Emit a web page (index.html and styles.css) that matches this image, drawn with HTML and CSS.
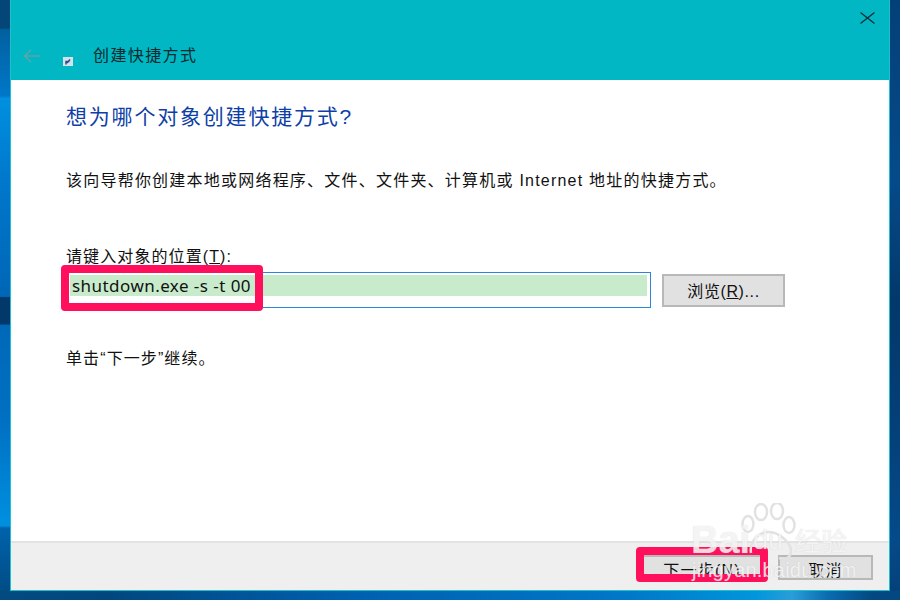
FILE: index.html
```html
<!DOCTYPE html>
<html lang="zh-CN">

<head>
    <meta charset="UTF-8">
    <title>创建快捷方式</title>
    <link rel="stylesheet" href="styles.css">
</head>

<body>
    <div class="ventana">
        <header class="cabecera">
            <svg class="cerrar" width="15" height="12" viewBox="0 0 15 12">
                <path d="M0.5 0.5 L14.5 11.5 M14.5 0.5 L0.5 11.5" stroke="#0b2a30" stroke-width="1.2" fill="none" />
            </svg>
            <div class="titulo-fila">
                <svg class="atras" width="17" height="14" viewBox="0 0 17 14">
                    <path d="M17 7 H1.5 M8 1 L1.5 7 L8 13" stroke="#5fa3ab" stroke-width="1.5" fill="none" />
                </svg>
                <svg class="icono" width="10" height="9" viewBox="0 0 10 9">
                    <rect width="10" height="9" fill="#d5e3e8" />
                    <path d="M3 7.5 V4.5 H6.5 M4 6 L7 2.5" stroke="#2a4f8f" stroke-width="1.5" fill="none" />
                </svg>
                <span class="titulo">创建快捷方式</span>
            </div>
        </header>
        <main class="contenido">
            <h1>想为哪个对象创建快捷方式?</h1>
            <p class="descripcion">该向导帮你创建本地或网络程序、文件、文件夹、计算机或 Internet 地址的快捷方式。</p>
            <label class="etiqueta">请键入对象的位置(<u>T</u>):</label>
            <div class="fila-campo">
                <div class="campo"><span class="seleccion">shutdown.exe -s -t 00</span></div>
                <button class="boton boton-examinar">浏览(<u>R</u>)...</button>
            </div>
            <p class="continuar">单击“下一步”继续。</p>
        </main>
        <footer class="pie">
            <button class="boton boton-siguiente">下一步(<u>N</u>)</button>
            <button class="boton">取消</button>
        </footer>
    </div>

    <!-- marcas rojas encima de la captura -->
    <div class="marca marca-campo"></div>
    <div class="marca marca-siguiente"></div>

    <div class="agua">
        <svg class="pata" width="56" height="60" viewBox="0 0 56 60">
            <g fill="rgba(255,255,255,0.7)" stroke="#e2e2e2" stroke-width="2.5">
                <ellipse cx="7" cy="21" rx="5.5" ry="8" />
                <ellipse cx="20" cy="9" rx="6" ry="8" />
                <ellipse cx="36" cy="8" rx="6" ry="8" />
                <ellipse cx="48" cy="22" rx="5.5" ry="8" />
            </g>
            <path d="M10 50 C8 38 18 29 28 29 C38 29 50 40 50 48 C50 55 44 57 38 55" fill="none" stroke="#e2e2e2" stroke-width="2.5" />
        </svg>
        <span class="agua-logo">Bai</span>
        <span class="agua-du">du</span>
        <span class="agua-jing">经验</span>
        <span class="agua-url">jingyan.baidu.com</span>
    </div>
</body>

</html>
```
FILE: styles.css
```css
body {
    margin: 0;
    height: 600px;
    overflow: hidden;
    position: relative;
    box-sizing: border-box;
    padding: 0 10px 9px;
    display: flex;
    font-family: "Liberation Sans", "Noto Sans CJK SC", sans-serif;
    background-color: #024a86;
    background-repeat: no-repeat;
    background-image:
        linear-gradient(90deg, #024a80 0%, #01477e 12%, #0060b0 40%, #0078c8 70%, #0096dc 84%, #2a9ed8 88%, #0a6cb0 92%, #034880 97%),
        linear-gradient(180deg, #034677 0%, #034677 4.6%, #02609f 5%, #0078c8 16%, #0090e0 16.4%, #0078cc 30%, #0066b6 49.4%, #03386a 49.6%, #03386a 54%, #0068b8 54.2%, #0070c2 70%, #0090e0 87.6%, #0062ac 88%, #004a80 100%),
        linear-gradient(180deg, #044078 0%, #054a8a 30%, #03386a 50%, #043f78 70%, #054a8a 90%, #044078 100%);
    background-size: 900px 9px, 10px 600px, 10px 600px;
    background-position: left bottom, left top, right top;
}

.ventana {
    flex: 1;
    display: flex;
    flex-direction: column;
    border: 1px solid #1fc0cc;
    border-top: none;
    background-color: #fff;
    color: #111;
    letter-spacing: 1.1px;
    font-size: 16px;
}

.cabecera {
    height: 80px;
    box-sizing: border-box;
    background-color: #00b7c3;
    position: relative;
    display: flex;
}

.cerrar {
    position: absolute;
    right: 14px;
    top: 12px;
}

.titulo-fila {
    display: flex;
    align-items: center;
    height: 20px;
    margin-top: 46px;
    padding-left: 12px;
}

.icono {
    margin: 10px 0 0 23px;
}

.titulo {
    margin-left: 20px;
    line-height: 20px;
    letter-spacing: 1.4px;
    color: #0c2a2e;
}

.contenido {
    flex: 1;
    padding: 24px 0 0 55px;
}

h1 {
    margin: 0;
    font-size: 21px;
    font-weight: normal;
    letter-spacing: 1.8px;
    line-height: 26px;
    color: #0f3fa6;
}

.descripcion {
    margin: 41px 0 0;
    line-height: 20px;
    letter-spacing: 1.22px;
}

.etiqueta {
    display: block;
    margin-top: 56px;
    line-height: 20px;
}

.fila-campo {
    display: flex;
    align-items: center;
    margin-top: 5px;
}

.campo {
    width: 585px;
    height: 36px;
    box-sizing: border-box;
    border: 1px solid #2b86d8;
    padding: 2px 3px 0;
    background-color: #fff;
}

.seleccion {
    display: block;
    height: 21px;
    padding-left: 2px;
    background-color: #c8eccb;
    font-family: "Noto Sans", sans-serif;
    font-size: 17px;
    line-height: 21px;
    letter-spacing: 0.45px;
}

.boton {
    width: 123px;
    height: 33px;
    padding: 0;
    border: 2px solid #b8b8b8;
    background-color: #e1e1e1;
    font-family: inherit;
    font-size: 16px;
    letter-spacing: 0.6px;
    color: #111;
}

.boton-examinar {
    margin-left: 11px;
}

.continuar {
    margin: 41px 0 0;
    line-height: 20px;
}

.pie {
    height: 49px;
    box-sizing: border-box;
    border-top: 2px solid #e2e2e2;
    background-color: #efefef;
    display: flex;
    justify-content: flex-end;
    align-items: center;
    gap: 15px;
    padding: 0 16px 0 0;
}

.pie .boton {
    width: 95px;
    height: 25px;
    margin-top: 1px;
    letter-spacing: 1.2px;
}

.pie .boton-siguiente {
    width: 122px;
}

.marca {
    position: absolute;
    box-sizing: border-box;
    border: 8px solid #ff0f5c;
    border-radius: 4px;
}

.marca-campo {
    left: 61px;
    top: 265px;
    width: 202px;
    height: 46px;
}

.marca-siguiente {
    left: 636px;
    top: 547px;
    width: 132px;
    height: 35px;
}

.agua {
    position: absolute;
    left: 690px;
    top: 500px;
    width: 210px;
    height: 90px;
    color: rgba(255, 255, 255, 0.75);
    text-shadow: 0 0 1px rgba(170, 170, 170, 0.5);
    font-family: "Liberation Sans", sans-serif;
}

.pata {
    position: absolute;
    left: 51px;
    top: 3px;
}

.agua-logo {
    position: absolute;
    left: 1px;
    top: 18px;
    font-size: 38px;
    font-weight: bold;
    line-height: 44px;
}

.agua-du {
    position: absolute;
    left: 63px;
    top: 24px;
    font-size: 27px;
    line-height: 32px;
}

.agua-jing {
    position: absolute;
    left: 105px;
    top: 26px;
    font-family: "Noto Sans CJK SC", sans-serif;
    font-size: 26px;
    line-height: 28px;
}

.agua-url {
    position: absolute;
    left: 2px;
    top: 58px;
    font-size: 20px;
    letter-spacing: 0.2px;
    line-height: 24px;
}
```
